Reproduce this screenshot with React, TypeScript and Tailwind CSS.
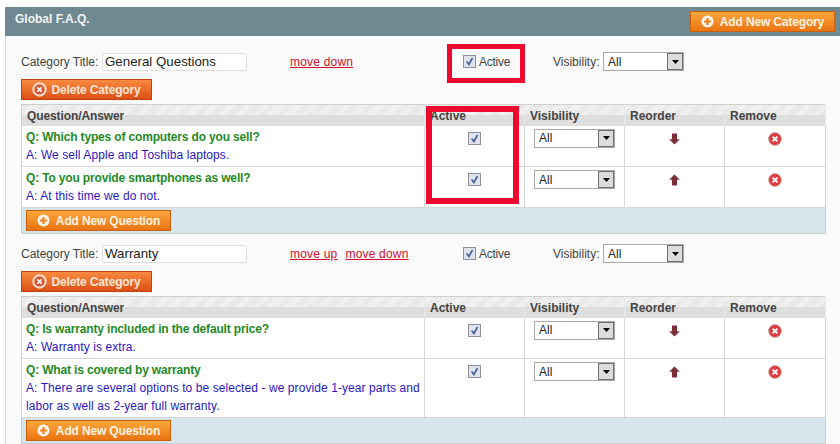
import React from "react";

const sections = [
  {
    title: "General Questions",
    moves: ["move down"],
    rows: [
      { q: "Q: Which types of computers do you sell?", a: ["A: We sell Apple and Toshiba laptops."], dir: "down", h: "h-[41px]" },
      { q: "Q: To you provide smartphones as well?", a: ["A: At this time we do not."], dir: "up", h: "h-[41px]" },
    ],
  },
  {
    title: "Warranty",
    moves: ["move up", "move down"],
    rows: [
      { q: "Q: Is warranty included in the default price?", a: ["A: Warranty is extra."], dir: "down", h: "h-[41px]" },
      {
        q: "Q: What is covered by warranty",
        a: ["A: There are several options to be selected - we provide 1-year parts and", "labor as well as 2-year full warranty."],
        dir: "up",
        h: "h-[59px]",
      },
    ],
  },
];

const columns = ["Active", "Visibility", "Reorder", "Remove"];

function PlusIcon() {
  return (
    <svg width="13" height="13" viewBox="0 0 13 13" className="shrink-0">
      <circle cx="6.5" cy="6.5" r="6" fill="#fff" fillOpacity="0.92" />
      <path d="M6.5 3v7M3 6.5h7" stroke="#ee8420" strokeWidth="2.2" />
    </svg>
  );
}

function CrossIcon() {
  return (
    <svg width="15" height="15" viewBox="0 0 15 15" className="shrink-0">
      <circle cx="7.5" cy="7.5" r="6.6" fill="#f6c9b4" stroke="#fbe3d6" strokeWidth="1.2" />
      <circle cx="7.5" cy="7.5" r="5" fill="#d9532a" />
      <path d="M5.4 5.4l4.2 4.2M9.6 5.4l-4.2 4.2" stroke="#fff" strokeWidth="1.9" />
    </svg>
  );
}

function RemoveIcon() {
  return (
    <svg width="14" height="14" viewBox="0 0 14 14">
      <circle cx="7" cy="7" r="6.4" fill="#dc3c3f" stroke="#c9a2a2" strokeWidth="0.8" />
      <path d="M4.6 4.6l4.8 4.8M9.4 4.6l-4.8 4.8" stroke="#fff" strokeWidth="2" />
    </svg>
  );
}

function Arrow({ dir }: { dir: string }) {
  return (
    <svg width="11" height="12" viewBox="0 0 11 12" className={dir === "up" ? "rotate-180" : ""}>
      <path d="M3 0.5h5v5.7h2.8L5.5 11.5.2 6.2H3z" fill="#7b2f38" />
    </svg>
  );
}

function Checkbox() {
  return (
    <span className="inline-flex h-[13px] w-[13px] items-center justify-center border border-[#8d8f9c] bg-[#dfe3ee]">
      <svg width="11" height="11" viewBox="0 0 11 11">
        <path d="M2.6 5.4l2.3 3 3.6-6.4" fill="none" stroke="#47609c" strokeWidth="1.7" />
      </svg>
    </span>
  );
}

function VisibilitySelect({ width }: { width: string }) {
  return (
    <span className={`flex h-[19px] ${width} items-center border border-[#a9a9a9] bg-white pl-[4px] text-[12px] text-[#222]`}>
      <span className="flex-1">All</span>
      <span className="flex h-[17px] w-[16px] items-center justify-center border border-[#6f6f6f] bg-[#dcdcdc]">
        <svg width="7" height="4" viewBox="0 0 7 4">
          <path d="M0 0h7L3.5 4z" fill="#000" />
        </svg>
      </span>
    </span>
  );
}

function OrangeButton({ label, width }: { label: string; width: string }) {
  return (
    <button className={`flex h-[21px] ${width} items-center justify-center gap-[6px] border border-[#c8610f] bg-gradient-to-b from-[#fba63a] to-[#ea7410] text-[12px] font-bold tracking-[-0.15px] text-[#fff3e2]`}>
      <PlusIcon />
      {label}
    </button>
  );
}

function CategoryForm({ title, moves }: { title: string; moves: string[] }) {
  return (
    <div className="flex h-[19px] items-center text-[12px] text-[#444]">
      <span className="w-[81px]">Category Title:</span>
      <span className="flex h-[18px] w-[145px] items-center rounded-[2px] border border-[#dedede] bg-white pl-[2px] pt-[1px] text-[13.3px] text-[#222]">
        {title}
      </span>
      <span className="ml-[43px] flex w-[173px] gap-[8px]">
        {moves.map((m) => (
          <a key={m} className="text-[12px] tracking-[0.2px] text-[#d3112b] underline">
            {m}
          </a>
        ))}
      </span>
      <Checkbox />
      <span className="ml-[3px] w-[74px] tracking-[-0.25px]">Active</span>
      <span className="w-[50px]">Visibility:</span>
      <VisibilitySelect width="w-[81px]" />
    </div>
  );
}

function FaqTable({ rows }: { rows: (typeof sections)[number]["rows"] }) {
  return (
    <table className="ml-[16px] w-[805px] table-fixed border-collapse border border-[#cfcfcf] bg-white text-[12px]">
      <thead>
        <tr className="h-[21px] bg-[linear-gradient(#0000_50%,#dedede_50%),repeating-linear-gradient(135deg,#e4e4e4_0,#e4e4e4_1px,#f6f6f6_1px,#f6f6f6_2px)] text-left font-bold text-[#444]">
          <th className="border-r border-[#e8e8e8] pl-[5px] pt-[2px] tracking-[-0.1px]">Question/Answer</th>
          {columns.map((c) => (
            <th key={c} className="w-[100px] border-r border-[#e8e8e8] pl-[5px] pt-[2px] last:w-[101px]">
              {c}
            </th>
          ))}
        </tr>
      </thead>
      <tbody>
        {rows.map((row) => (
          <tr key={row.q} className={`${row.h} border-b border-[#d6d6d6] align-top`}>
            <td className="border-r border-[#d6d6d6] pl-[4px] pt-[2px] leading-[18px]">
              <div className="font-bold tracking-[-0.16px] text-[#1f8a25]">{row.q}</div>
              {row.a.map((line) => (
                <div key={line} className="tracking-[0.08px] text-[#2a18c4]">
                  {line}
                </div>
              ))}
            </td>
            <td className="border-r border-[#d6d6d6] pt-[5px] text-center">
              <Checkbox />
            </td>
            <td className="border-r border-[#d6d6d6] pl-[9px] pt-[3px]">
              <VisibilitySelect width="w-[81px]" />
            </td>
            <td className="border-r border-[#d6d6d6] pt-[7px] text-center">
              <span className="flex justify-center">
                <Arrow dir={row.dir} />
              </span>
            </td>
            <td className="pt-[6px]">
              <span className="flex justify-center">
                <RemoveIcon />
              </span>
            </td>
          </tr>
        ))}
        <tr className="h-[26px] bg-[#d6e4ec]">
          <td colSpan={5} className="pl-[4px] align-middle">
            <OrangeButton label="Add New Question" width="w-[145px]" />
          </td>
        </tr>
      </tbody>
    </table>
  );
}

export default function App() {
  return (
    <div className="relative h-[444px] w-[840px] overflow-hidden bg-white pt-[7px] font-['Liberation_Sans',Arial,sans-serif]">
      <div className="ml-[5px] flex h-[29px] items-start justify-between bg-[#6f8992] pl-[10px] pr-[5px]">
        <span className="pt-[3px] text-[12px] font-bold text-[#f2f5f6]">Global F.A.Q.</span>
        <span className="pt-[4px]">
          <OrangeButton label="Add New Category" width="w-[145px]" />
        </span>
      </div>
      <div className="ml-[5px] h-[408px] border-l border-[#dcdcdc] bg-[#fafafa] pt-[16px]">
        {sections.map((s, i) => (
          <div key={s.title} className={i === 1 ? "mt-[10px]" : ""}>
            <div className="pl-[15px]">
              <CategoryForm title={s.title} moves={s.moves} />
              <button className="mb-[4px] mt-[8px] flex h-[21px] w-[131px] items-center justify-center gap-[4px] border border-[#c2410e] bg-gradient-to-b from-[#f88a3e] to-[#dd4f14] text-[12px] font-bold tracking-[-0.15px] text-[#fde6d6]">
                <CrossIcon />
                Delete Category
              </button>
            </div>
            <div className="-ml-[1px]">
              <FaqTable rows={s.rows} />
            </div>
          </div>
        ))}
      </div>
      {/* red annotation boxes drawn over the form */}
      <div className="absolute left-[447px] top-[44px] h-[39px] w-[78px] border-[5px] border-[#ee0a2e]" />
      <div className="absolute left-[426px] top-[106px] h-[98px] w-[93px] border-[6px] border-[#ee0a2e]" />
    </div>
  );
}
